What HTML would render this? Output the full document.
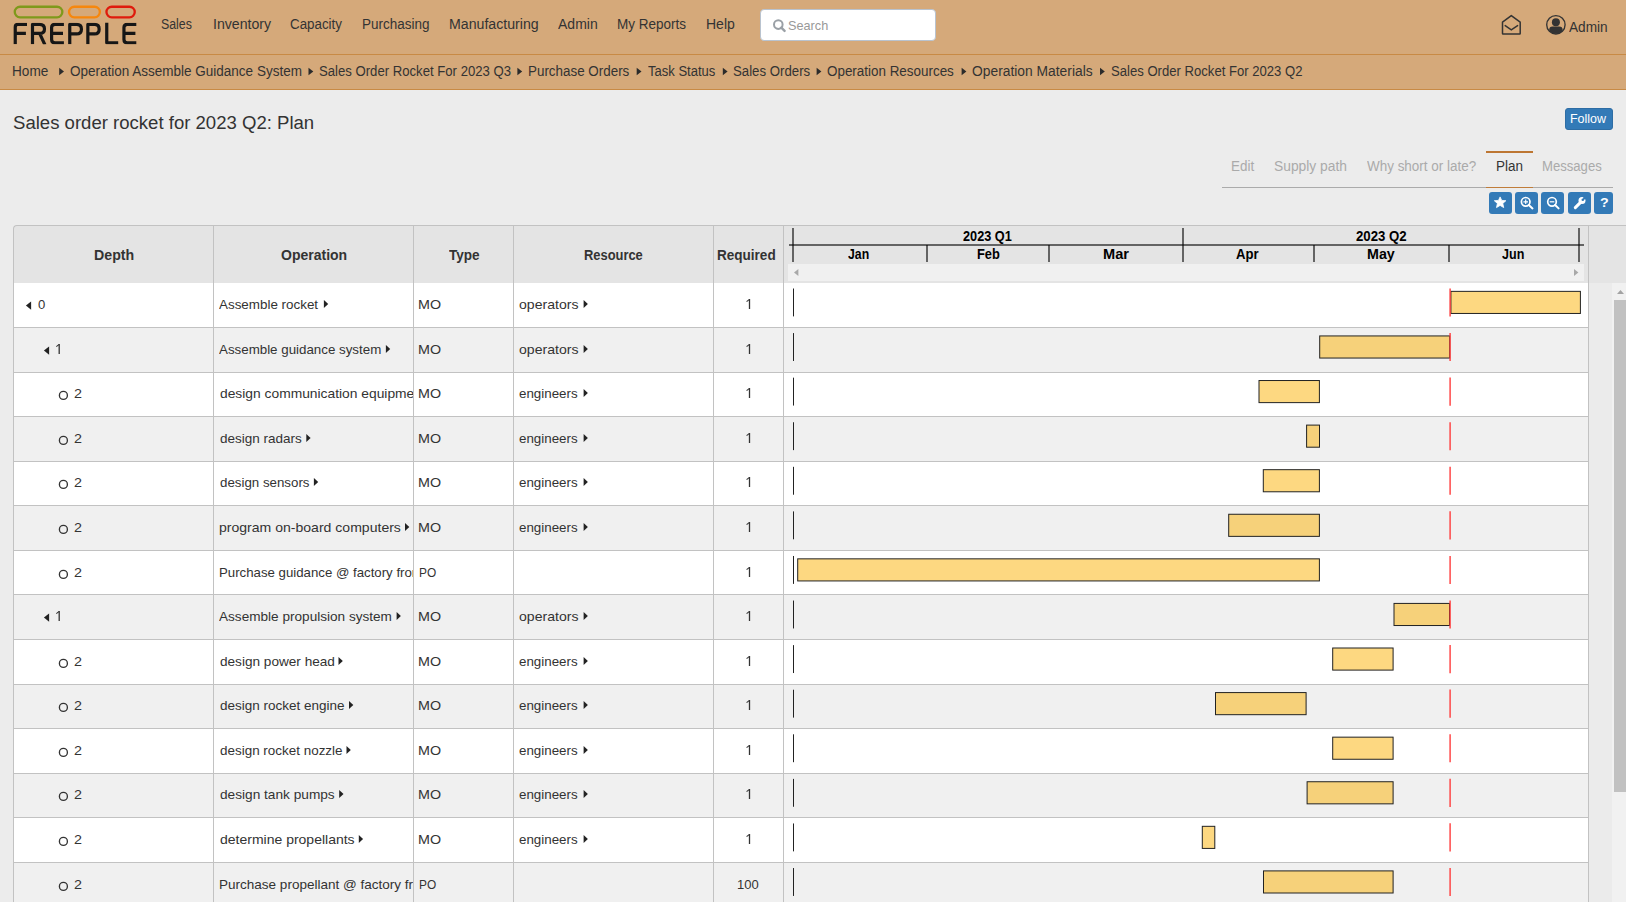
<!DOCTYPE html><html><head><meta charset="utf-8"><title>frePPLe</title><style>
html,body{margin:0;padding:0;}
body{width:1626px;height:902px;overflow:hidden;position:relative;background:#ececec;font-family:"Liberation Sans", sans-serif;}
.t{position:absolute;white-space:nowrap;transform-origin:left center;}
.r{position:absolute;box-sizing:border-box;}
svg{position:absolute;overflow:visible;}
</style></head><body>
<div class="r" style="left:0px;top:0px;width:1626px;height:54px;background:#d5a97a;"></div>
<div class="r" style="left:0px;top:54px;width:1626px;height:1px;background:#c88a45;"></div>
<div class="r" style="left:0px;top:55px;width:1626px;height:34px;background:#d5a97a;"></div>
<div class="r" style="left:0px;top:89px;width:1626px;height:1px;background:#c88a45;"></div>
<svg style="left:0;top:0" width="150" height="50" viewBox="0 0 150 50">
<rect x="14.75" y="6.75" width="47.6" height="10.6" rx="5.3" fill="none" stroke="#7f991b" stroke-width="2.3"/>
<rect x="69.05" y="6.75" width="30.8" height="10.6" rx="5.3" fill="none" stroke="#f6870d" stroke-width="2.3"/>
<rect x="106.45" y="6.75" width="28.3" height="10.6" rx="5.3" fill="none" stroke="#df1b0c" stroke-width="2.3"/>
<defs><clipPath id="lg"><rect x="0" y="22.7" width="150" height="21.6"/></clipPath></defs><g fill="none" stroke="#161616" stroke-width="3.2" stroke-linejoin="round" clip-path="url(#lg)">
<path d="M15.25 44.3V27Q15.25 24.4 18 24.4H27M15.25 33.4H25.9"/>
<path d="M32.5 44.3V24.4H39.5Q44.5 24.4 44.5 28.9Q44.5 33.4 39.5 33.4H32.5M39.6 33.4L45 45"/>
<path d="M63.9 24.4H55Q51.6 24.4 51.6 27.5V39.5Q51.6 42.85 55 42.85H63.9M51.6 33.4H63"/>
<path d="M69.75 44.3V24.4H76.5Q81.45 24.4 81.45 29.15Q81.45 33.9 76.5 33.9H69.75"/>
<path d="M87.85 44.3V24.4H94.5Q99.15 24.4 99.15 29.15Q99.15 33.9 94.5 33.9H87.85"/>
<path d="M106.75 22V42.85H118.2"/>
<path d="M136.3 24.4H127.4Q123.95 24.4 123.95 27.5V39.5Q123.95 42.85 127.4 42.85H136.3M123.95 33.4H135.4"/>
</g></svg>
<span id="t1" class="t" style="left:161.36px;top:17.15px;font-size:14px;line-height:14px;color:#333;transform:scaleX(0.8827);">Sales</span>
<span id="t2" class="t" style="left:213.0px;top:17.15px;font-size:14px;line-height:14px;color:#333;transform:scaleX(1.0090);">Inventory</span>
<span id="t3" class="t" style="left:290.01px;top:17.15px;font-size:14px;line-height:14px;color:#333;transform:scaleX(0.9540);">Capacity</span>
<span id="t4" class="t" style="left:361.64px;top:17.15px;font-size:14px;line-height:14px;color:#333;transform:scaleX(0.9640);">Purchasing</span>
<span id="t5" class="t" style="left:448.99px;top:17.15px;font-size:14px;line-height:14px;color:#333;transform:scaleX(1.0115);">Manufacturing</span>
<span id="t6" class="t" style="left:558.19px;top:17.15px;font-size:14px;line-height:14px;color:#333;transform:scaleX(1.0003);">Admin</span>
<span id="t7" class="t" style="left:617.06px;top:17.15px;font-size:14px;line-height:14px;color:#333;transform:scaleX(0.9644);">My Reports</span>
<span id="t8" class="t" style="left:705.99px;top:17.15px;font-size:14px;line-height:14px;color:#333;transform:scaleX(1.0008);">Help</span>
<div class="r" style="left:760px;top:9px;width:176px;height:32px;background:#fff;border:1px solid #b9c3cf;border-radius:4px;"></div>
<span id="t9" class="t" style="left:788.21px;top:19.00px;font-size:13px;line-height:13px;color:#999;transform:scaleX(0.9756);">Search</span>
<span id="t10" class="t" style="left:1569.22px;top:20.15px;font-size:14px;line-height:14px;color:#333;transform:scaleX(0.9744);">Admin</span>
<span id="t11" class="t" style="left:12.43px;top:64.15px;font-size:14px;line-height:14px;color:#333;transform:scaleX(0.9726);">Home</span>
<span id="t12" class="t" style="left:69.83px;top:64.15px;font-size:14px;line-height:14px;color:#333;transform:scaleX(0.9644);">Operation Assemble Guidance System</span>
<span id="t13" class="t" style="left:318.87px;top:64.15px;font-size:14px;line-height:14px;color:#333;transform:scaleX(0.9384);">Sales Order Rocket For 2023 Q3</span>
<span id="t14" class="t" style="left:528.25px;top:64.15px;font-size:14px;line-height:14px;color:#333;transform:scaleX(0.9572);">Purchase Orders</span>
<span id="t15" class="t" style="left:648.0px;top:64.15px;font-size:14px;line-height:14px;color:#333;transform:scaleX(0.9308);">Task Status</span>
<span id="t16" class="t" style="left:733.05px;top:64.15px;font-size:14px;line-height:14px;color:#333;transform:scaleX(0.9446);">Sales Orders</span>
<span id="t17" class="t" style="left:827.02px;top:64.15px;font-size:14px;line-height:14px;color:#333;transform:scaleX(0.9585);">Operation Resources</span>
<span id="t18" class="t" style="left:972.2px;top:64.15px;font-size:14px;line-height:14px;color:#333;transform:scaleX(0.9876);">Operation Materials</span>
<span id="t19" class="t" style="left:1111.25px;top:64.15px;font-size:14px;line-height:14px;color:#333;transform:scaleX(0.9359);">Sales Order Rocket For 2023 Q2</span>
<span id="t20" class="t" style="left:12.78px;top:113.76px;font-size:18px;line-height:18px;color:#333;transform:scaleX(1.0309);">Sales order rocket for 2023 Q2: Plan</span>
<div class="r" style="left:1565px;top:108px;width:48px;height:22px;background:#337ab7;border:1px solid #2e6da4;border-radius:3px;"></div>
<span id="t21" class="t" style="left:1570.06px;top:112.30px;font-size:13px;line-height:13px;color:#fff;transform:scaleX(0.9591);">Follow</span>
<span id="t22" class="t" style="left:1231.25px;top:159.45px;font-size:14px;line-height:14px;color:#aaa;transform:scaleX(0.9590);">Edit</span>
<span id="t23" class="t" style="left:1274.21px;top:159.45px;font-size:14px;line-height:14px;color:#aaa;transform:scaleX(0.9865);">Supply path</span>
<span id="t24" class="t" style="left:1366.6px;top:159.45px;font-size:14px;line-height:14px;color:#aaa;transform:scaleX(0.9605);">Why short or late?</span>
<span id="t25" class="t" style="left:1495.86px;top:159.45px;font-size:14px;line-height:14px;color:#333;transform:scaleX(0.9625);">Plan</span>
<span id="t26" class="t" style="left:1542.25px;top:159.45px;font-size:14px;line-height:14px;color:#aaa;transform:scaleX(0.9366);">Messages</span>
<div class="r" style="left:1222px;top:187px;width:391px;height:1px;background:#ababab;"></div>
<div class="r" style="left:1486px;top:151px;width:47px;height:2px;background:#bd7632;"></div>
<div class="r" style="left:1486px;top:187px;width:47px;height:1px;background:#c07d3a;"></div>
<div class="r" style="left:1489px;top:192px;width:23px;height:22px;background:#337ab7;border-radius:3px;"></div>
<div class="r" style="left:1515px;top:192px;width:23px;height:22px;background:#337ab7;border-radius:3px;"></div>
<div class="r" style="left:1541px;top:192px;width:23px;height:22px;background:#337ab7;border-radius:3px;"></div>
<div class="r" style="left:1568px;top:192px;width:23px;height:22px;background:#337ab7;border-radius:3px;"></div>
<div class="r" style="left:1594px;top:192px;width:19px;height:22px;background:#337ab7;border-radius:3px;"></div>
<span id="t27" class="t" style="left:1600.01px;top:196.30px;font-size:13px;line-height:13px;color:#fff;font-weight:bold;transform:scaleX(1.0958);">?</span>
<div class="r" style="left:13px;top:225px;width:1623px;height:58px;background:#e4e4e4;border-top:1px solid #c2c2c2;border-left:1px solid #c2c2c2;border-top-left-radius:4px;"></div>
<div class="r" style="left:13px;top:283px;width:1575px;height:44px;background:#fff;"></div>
<div class="r" style="left:13px;top:327px;width:1575px;height:1px;background:#c2c2c2;"></div>
<div class="r" style="left:13px;top:328px;width:1575px;height:44px;background:#f0f0f0;"></div>
<div class="r" style="left:13px;top:372px;width:1575px;height:1px;background:#c2c2c2;"></div>
<div class="r" style="left:13px;top:373px;width:1575px;height:43px;background:#fff;"></div>
<div class="r" style="left:13px;top:416px;width:1575px;height:1px;background:#c2c2c2;"></div>
<div class="r" style="left:13px;top:417px;width:1575px;height:44px;background:#f0f0f0;"></div>
<div class="r" style="left:13px;top:461px;width:1575px;height:1px;background:#c2c2c2;"></div>
<div class="r" style="left:13px;top:462px;width:1575px;height:43px;background:#fff;"></div>
<div class="r" style="left:13px;top:505px;width:1575px;height:1px;background:#c2c2c2;"></div>
<div class="r" style="left:13px;top:506px;width:1575px;height:44px;background:#f0f0f0;"></div>
<div class="r" style="left:13px;top:550px;width:1575px;height:1px;background:#c2c2c2;"></div>
<div class="r" style="left:13px;top:551px;width:1575px;height:43px;background:#fff;"></div>
<div class="r" style="left:13px;top:594px;width:1575px;height:1px;background:#c2c2c2;"></div>
<div class="r" style="left:13px;top:595px;width:1575px;height:44px;background:#f0f0f0;"></div>
<div class="r" style="left:13px;top:639px;width:1575px;height:1px;background:#c2c2c2;"></div>
<div class="r" style="left:13px;top:640px;width:1575px;height:44px;background:#fff;"></div>
<div class="r" style="left:13px;top:684px;width:1575px;height:1px;background:#c2c2c2;"></div>
<div class="r" style="left:13px;top:685px;width:1575px;height:43px;background:#f0f0f0;"></div>
<div class="r" style="left:13px;top:728px;width:1575px;height:1px;background:#c2c2c2;"></div>
<div class="r" style="left:13px;top:729px;width:1575px;height:44px;background:#fff;"></div>
<div class="r" style="left:13px;top:773px;width:1575px;height:1px;background:#c2c2c2;"></div>
<div class="r" style="left:13px;top:774px;width:1575px;height:43px;background:#f0f0f0;"></div>
<div class="r" style="left:13px;top:817px;width:1575px;height:1px;background:#c2c2c2;"></div>
<div class="r" style="left:13px;top:818px;width:1575px;height:44px;background:#fff;"></div>
<div class="r" style="left:13px;top:862px;width:1575px;height:1px;background:#c2c2c2;"></div>
<div class="r" style="left:13px;top:863px;width:1575px;height:43px;background:#f0f0f0;"></div>
<div class="r" style="left:13px;top:906px;width:1575px;height:1px;background:#c2c2c2;"></div>
<div class="r" style="left:13px;top:283px;width:1px;height:619px;background:#c2c2c2;"></div>
<div class="r" style="left:213px;top:226px;width:1px;height:677px;background:#c2c2c2;"></div>
<div class="r" style="left:413px;top:226px;width:1px;height:677px;background:#c2c2c2;"></div>
<div class="r" style="left:513px;top:226px;width:1px;height:677px;background:#c2c2c2;"></div>
<div class="r" style="left:713px;top:226px;width:1px;height:677px;background:#c2c2c2;"></div>
<div class="r" style="left:783px;top:226px;width:1px;height:677px;background:#c2c2c2;"></div>
<div class="r" style="left:1588px;top:226px;width:1px;height:677px;background:#c2c2c2;"></div>
<div class="r" style="left:1589px;top:283px;width:37px;height:619px;background:#ebebeb;"></div>
<div class="r" style="left:1612px;top:283px;width:14px;height:619px;background:#f1f1f1;"></div>
<div class="r" style="left:1614px;top:300px;width:12px;height:492px;background:#c1c1c1;"></div>
<span id="t28" class="t" style="left:93.78px;top:248.05px;font-size:14px;line-height:14px;color:#333;font-weight:bold;transform:scaleX(1.0134);">Depth</span>
<span id="t29" class="t" style="left:280.8px;top:248.05px;font-size:14px;line-height:14px;color:#333;font-weight:bold;transform:scaleX(1.0002);">Operation</span>
<span id="t30" class="t" style="left:448.57px;top:248.05px;font-size:14px;line-height:14px;color:#333;font-weight:bold;transform:scaleX(0.9691);">Type</span>
<span id="t31" class="t" style="left:584.26px;top:248.05px;font-size:14px;line-height:14px;color:#333;font-weight:bold;transform:scaleX(0.9208);">Resource</span>
<span id="t32" class="t" style="left:717.21px;top:248.05px;font-size:14px;line-height:14px;color:#333;font-weight:bold;transform:scaleX(0.9668);">Required</span>
<div class="r" style="left:788px;top:264px;width:796px;height:17px;background:#f0f0f0;"></div>
<span id="t33" class="t" style="left:963.0px;top:229.05px;font-size:14px;line-height:14px;color:#000;font-weight:bold;transform:scaleX(0.9076);">2023 Q1</span>
<span id="t34" class="t" style="left:1356.02px;top:229.05px;font-size:14px;line-height:14px;color:#000;font-weight:bold;transform:scaleX(0.9436);">2023 Q2</span>
<span id="t35" class="t" style="left:848.0px;top:246.95px;font-size:14px;line-height:14px;color:#000;font-weight:bold;transform:scaleX(0.8758);">Jan</span>
<span id="t36" class="t" style="left:977.24px;top:246.95px;font-size:14px;line-height:14px;color:#000;font-weight:bold;transform:scaleX(0.9174);">Feb</span>
<span id="t37" class="t" style="left:1102.98px;top:246.95px;font-size:14px;line-height:14px;color:#000;font-weight:bold;transform:scaleX(1.0424);">Mar</span>
<span id="t38" class="t" style="left:1236.21px;top:246.95px;font-size:14px;line-height:14px;color:#000;font-weight:bold;transform:scaleX(0.9382);">Apr</span>
<span id="t39" class="t" style="left:1366.76px;top:246.95px;font-size:14px;line-height:14px;color:#000;font-weight:bold;transform:scaleX(1.0199);">May</span>
<span id="t40" class="t" style="left:1502.21px;top:246.95px;font-size:14px;line-height:14px;color:#000;font-weight:bold;transform:scaleX(0.8967);">Jun</span>
<span id="t41" class="t" style="left:37.6px;top:298.00px;font-size:13px;line-height:13px;color:#333;transform:scaleX(1.0091);">0</span>
<div class="r" style="left:214px;top:283px;width:199px;height:44px;overflow:hidden;">
<span id="t42" class="t" style="left:5.01px;top:15.00px;font-size:13px;line-height:13px;color:#333;transform:scaleX(1.0310);">Assemble rocket</span>
</div>
<span id="t43" class="t" style="left:418.32px;top:298.00px;font-size:13px;line-height:13px;color:#333;transform:scaleX(1.1010);">MO</span>
<span id="t44" class="t" style="left:518.81px;top:298.00px;font-size:13px;line-height:13px;color:#333;transform:scaleX(1.0820);">operators</span>
<div class="r" style="left:214px;top:328px;width:199px;height:44px;overflow:hidden;">
<span id="t45" class="t" style="left:5.01px;top:15.00px;font-size:13px;line-height:13px;color:#333;transform:scaleX(1.0252);">Assemble guidance system</span>
</div>
<span id="t46" class="t" style="left:418.32px;top:343.00px;font-size:13px;line-height:13px;color:#333;transform:scaleX(1.1010);">MO</span>
<span id="t47" class="t" style="left:518.81px;top:343.00px;font-size:13px;line-height:13px;color:#333;transform:scaleX(1.0820);">operators</span>
<span id="t48" class="t" style="left:73.65px;top:387.00px;font-size:13px;line-height:13px;color:#333;transform:scaleX(1.1018);">2</span>
<div class="r" style="left:214px;top:372px;width:199px;height:44px;overflow:hidden;">
<span id="t49" class="t" style="left:5.97px;top:15.00px;font-size:13px;line-height:13px;color:#333;transform:scaleX(1.0626);">design communication equipment</span>
</div>
<span id="t50" class="t" style="left:418.32px;top:387.00px;font-size:13px;line-height:13px;color:#333;transform:scaleX(1.1010);">MO</span>
<span id="t51" class="t" style="left:518.81px;top:387.00px;font-size:13px;line-height:13px;color:#333;transform:scaleX(1.0264);">engineers</span>
<span id="t52" class="t" style="left:73.65px;top:432.00px;font-size:13px;line-height:13px;color:#333;transform:scaleX(1.1018);">2</span>
<div class="r" style="left:214px;top:417px;width:199px;height:44px;overflow:hidden;">
<span id="t53" class="t" style="left:5.98px;top:15.00px;font-size:13px;line-height:13px;color:#333;transform:scaleX(1.0385);">design radars</span>
</div>
<span id="t54" class="t" style="left:418.32px;top:432.00px;font-size:13px;line-height:13px;color:#333;transform:scaleX(1.1010);">MO</span>
<span id="t55" class="t" style="left:518.81px;top:432.00px;font-size:13px;line-height:13px;color:#333;transform:scaleX(1.0264);">engineers</span>
<span id="t56" class="t" style="left:73.65px;top:476.00px;font-size:13px;line-height:13px;color:#333;transform:scaleX(1.1018);">2</span>
<div class="r" style="left:214px;top:461px;width:199px;height:44px;overflow:hidden;">
<span id="t57" class="t" style="left:5.99px;top:15.00px;font-size:13px;line-height:13px;color:#333;transform:scaleX(1.0231);">design sensors</span>
</div>
<span id="t58" class="t" style="left:418.32px;top:476.00px;font-size:13px;line-height:13px;color:#333;transform:scaleX(1.1010);">MO</span>
<span id="t59" class="t" style="left:518.81px;top:476.00px;font-size:13px;line-height:13px;color:#333;transform:scaleX(1.0264);">engineers</span>
<span id="t60" class="t" style="left:73.65px;top:521.00px;font-size:13px;line-height:13px;color:#333;transform:scaleX(1.1018);">2</span>
<div class="r" style="left:214px;top:506px;width:199px;height:44px;overflow:hidden;">
<span id="t61" class="t" style="left:4.96px;top:15.00px;font-size:13px;line-height:13px;color:#333;transform:scaleX(1.0804);">program on-board computers</span>
</div>
<span id="t62" class="t" style="left:418.32px;top:521.00px;font-size:13px;line-height:13px;color:#333;transform:scaleX(1.1010);">MO</span>
<span id="t63" class="t" style="left:518.81px;top:521.00px;font-size:13px;line-height:13px;color:#333;transform:scaleX(1.0264);">engineers</span>
<span id="t64" class="t" style="left:73.65px;top:566.00px;font-size:13px;line-height:13px;color:#333;transform:scaleX(1.1018);">2</span>
<div class="r" style="left:214px;top:551px;width:199px;height:44px;overflow:hidden;">
<span id="t65" class="t" style="left:4.99px;top:15.00px;font-size:13px;line-height:13px;color:#333;transform:scaleX(1.0176);">Purchase guidance @ factory from supplier</span>
</div>
<span id="t66" class="t" style="left:418.5px;top:566.00px;font-size:13px;line-height:13px;color:#333;transform:scaleX(0.9153);">PO</span>
<div class="r" style="left:214px;top:595px;width:199px;height:44px;overflow:hidden;">
<span id="t67" class="t" style="left:5.02px;top:15.00px;font-size:13px;line-height:13px;color:#333;transform:scaleX(1.0452);">Assemble propulsion system</span>
</div>
<span id="t68" class="t" style="left:418.32px;top:610.00px;font-size:13px;line-height:13px;color:#333;transform:scaleX(1.1010);">MO</span>
<span id="t69" class="t" style="left:518.81px;top:610.00px;font-size:13px;line-height:13px;color:#333;transform:scaleX(1.0820);">operators</span>
<span id="t70" class="t" style="left:73.65px;top:655.00px;font-size:13px;line-height:13px;color:#333;transform:scaleX(1.1018);">2</span>
<div class="r" style="left:214px;top:640px;width:199px;height:44px;overflow:hidden;">
<span id="t71" class="t" style="left:5.98px;top:15.00px;font-size:13px;line-height:13px;color:#333;transform:scaleX(1.0459);">design power head</span>
</div>
<span id="t72" class="t" style="left:418.32px;top:655.00px;font-size:13px;line-height:13px;color:#333;transform:scaleX(1.1010);">MO</span>
<span id="t73" class="t" style="left:518.81px;top:655.00px;font-size:13px;line-height:13px;color:#333;transform:scaleX(1.0264);">engineers</span>
<span id="t74" class="t" style="left:73.65px;top:699.00px;font-size:13px;line-height:13px;color:#333;transform:scaleX(1.1018);">2</span>
<div class="r" style="left:214px;top:684px;width:199px;height:44px;overflow:hidden;">
<span id="t75" class="t" style="left:5.98px;top:15.00px;font-size:13px;line-height:13px;color:#333;transform:scaleX(1.0378);">design rocket engine</span>
</div>
<span id="t76" class="t" style="left:418.32px;top:699.00px;font-size:13px;line-height:13px;color:#333;transform:scaleX(1.1010);">MO</span>
<span id="t77" class="t" style="left:518.81px;top:699.00px;font-size:13px;line-height:13px;color:#333;transform:scaleX(1.0264);">engineers</span>
<span id="t78" class="t" style="left:73.65px;top:744.00px;font-size:13px;line-height:13px;color:#333;transform:scaleX(1.1018);">2</span>
<div class="r" style="left:214px;top:729px;width:199px;height:44px;overflow:hidden;">
<span id="t79" class="t" style="left:5.98px;top:15.00px;font-size:13px;line-height:13px;color:#333;transform:scaleX(1.0339);">design rocket nozzle</span>
</div>
<span id="t80" class="t" style="left:418.32px;top:744.00px;font-size:13px;line-height:13px;color:#333;transform:scaleX(1.1010);">MO</span>
<span id="t81" class="t" style="left:518.81px;top:744.00px;font-size:13px;line-height:13px;color:#333;transform:scaleX(1.0264);">engineers</span>
<span id="t82" class="t" style="left:73.65px;top:788.00px;font-size:13px;line-height:13px;color:#333;transform:scaleX(1.1018);">2</span>
<div class="r" style="left:214px;top:773px;width:199px;height:44px;overflow:hidden;">
<span id="t83" class="t" style="left:5.97px;top:15.00px;font-size:13px;line-height:13px;color:#333;transform:scaleX(1.0510);">design tank pumps</span>
</div>
<span id="t84" class="t" style="left:418.32px;top:788.00px;font-size:13px;line-height:13px;color:#333;transform:scaleX(1.1010);">MO</span>
<span id="t85" class="t" style="left:518.81px;top:788.00px;font-size:13px;line-height:13px;color:#333;transform:scaleX(1.0264);">engineers</span>
<span id="t86" class="t" style="left:73.65px;top:833.00px;font-size:13px;line-height:13px;color:#333;transform:scaleX(1.1018);">2</span>
<div class="r" style="left:214px;top:818px;width:199px;height:44px;overflow:hidden;">
<span id="t87" class="t" style="left:5.96px;top:15.00px;font-size:13px;line-height:13px;color:#333;transform:scaleX(1.0767);">determine propellants</span>
</div>
<span id="t88" class="t" style="left:418.32px;top:833.00px;font-size:13px;line-height:13px;color:#333;transform:scaleX(1.1010);">MO</span>
<span id="t89" class="t" style="left:518.81px;top:833.00px;font-size:13px;line-height:13px;color:#333;transform:scaleX(1.0264);">engineers</span>
<span id="t90" class="t" style="left:73.65px;top:878.00px;font-size:13px;line-height:13px;color:#333;transform:scaleX(1.1018);">2</span>
<div class="r" style="left:214px;top:863px;width:199px;height:44px;overflow:hidden;">
<span id="t91" class="t" style="left:4.98px;top:15.00px;font-size:13px;line-height:13px;color:#333;transform:scaleX(1.0400);">Purchase propellant @ factory from supplier</span>
</div>
<span id="t92" class="t" style="left:418.5px;top:878.00px;font-size:13px;line-height:13px;color:#333;transform:scaleX(0.9153);">PO</span>
<span id="t93" class="t" style="left:737.0px;top:878.00px;font-size:13px;line-height:13px;color:#333;">100</span>
<svg style="left:0;top:0" width="1626" height="902" viewBox="0 0 1626 902"><circle cx="778.3" cy="24.6" r="4.3" fill="none" stroke="#9aa0a6" stroke-width="2"/>
<path d="M781.3 27.6L784.6 30.9" stroke="#9aa0a6" stroke-width="2.4" stroke-linecap="round"/>
<path d="M1502.5 33.5V22.2L1511.3 15.6L1520.2 22.2V33.5Q1520.2 34 1519.7 34H1503Q1502.5 34 1502.5 33.5Z" fill="none" stroke="#333" stroke-width="1.5" stroke-linejoin="round"/>
<path d="M1505.2 25.6L1511.3 29.8L1517.6 25.6" fill="none" stroke="#333" stroke-width="1.5" stroke-linecap="round"/>
<defs><clipPath id="uc"><circle cx="1555.9" cy="24.8" r="9"/></clipPath></defs>
<circle cx="1555.9" cy="24.8" r="9.2" fill="none" stroke="#333" stroke-width="1.35"/>
<circle cx="1555.9" cy="22.2" r="4" fill="#333"/>
<g clip-path="url(#uc)"><path d="M1549.2 36V29.8Q1549.2 26.5 1552.6 26.5H1559.2Q1562.6 26.5 1562.6 29.8V36Z" fill="#333"/></g>
<path d="M59.199999999999996 67.8L63.99999999999999 71.5L59.199999999999996 75.2Z" fill="#2b2b2b"/>
<path d="M308.5 67.8L313.3 71.5L308.5 75.2Z" fill="#2b2b2b"/>
<path d="M517.4 67.8L522.1999999999999 71.5L517.4 75.2Z" fill="#2b2b2b"/>
<path d="M636.6999999999999 67.8L641.4999999999999 71.5L636.6999999999999 75.2Z" fill="#2b2b2b"/>
<path d="M722.8 67.8L727.5999999999999 71.5L722.8 75.2Z" fill="#2b2b2b"/>
<path d="M816.5999999999999 67.8L821.3999999999999 71.5L816.5999999999999 75.2Z" fill="#2b2b2b"/>
<path d="M961.5999999999999 67.8L966.3999999999999 71.5L961.5999999999999 75.2Z" fill="#2b2b2b"/>
<path d="M1100.0 67.8L1104.8 71.5L1100.0 75.2Z" fill="#2b2b2b"/>
<path d="M1500.1 196.9L1501.7 200.4L1505.9 200.7L1502.8 203.4L1503.7 207.6L1500.1 205.4L1496.5 207.6L1497.4 203.4L1494.3 200.7L1498.5 200.4Z" fill="#fff" stroke="#fff" stroke-width="0.8" stroke-linejoin="round"/>
<circle cx="1525.7" cy="201.8" r="4.3" fill="none" stroke="#fff" stroke-width="1.7"/>
<path d="M1528.8 205L1532.5 208.4" stroke="#fff" stroke-width="2" stroke-linecap="round"/>
<path d="M1523.4 201.8H1528M1525.7 199.5V204.1" stroke="#fff" stroke-width="1.2"/>
<circle cx="1552" cy="201.8" r="4.3" fill="none" stroke="#fff" stroke-width="1.7"/>
<path d="M1555.1 205L1558.6 208.4" stroke="#fff" stroke-width="2" stroke-linecap="round"/>
<path d="M1549.7 201.8H1554.3" stroke="#fff" stroke-width="1.2"/>
<path d="M1575.3 207.6L1580.3 202.6" stroke="#fff" stroke-width="3" stroke-linecap="round"/>
<circle cx="1582" cy="200.4" r="3.5" fill="#fff"/>
<circle cx="1582.8" cy="199.8" r="1.3" fill="#337ab7"/>
<path d="M1582.8 199.8L1583.8 195.2L1587.6 199.1Z" fill="#337ab7"/>
<path d="M1617 294L1620.5 290L1624 294Z" fill="#a3a3a3"/>
<g fill="none" stroke="rgba(0,0,0,0.56)" stroke-width="2">
<path d="M789 245H1584"/>
<path d="M793 228V262M1183 228V262M1579 228V262"/>
<path d="M927 245V262M1049 245V262M1314 245V262M1449 245V262"/>
</g>
<path d="M798.4 269L794 272.5L798.4 276Z" fill="#a8a8a8"/>
<path d="M1574 269L1578.4 272.5L1574 276Z" fill="#a8a8a8"/>
<path d="M31.099999999999998 301.4L25.9 305.59999999999997L31.099999999999998 309.79999999999995Z" fill="#222"/>
<path d="M323.9 300L328.2 304.0L323.9 308Z" fill="#222"/>
<path d="M583.6 300L587.9 304.0L583.6 308Z" fill="#222"/>
<path d="M749.50 309.00V299.00" stroke="#333" stroke-width="1.3"/>
<path d="M746.60 301.60L749.50 299.40" stroke="#333" stroke-width="1.1"/>
<path d="M49.1 346.4L43.9 350.59999999999997L49.1 354.79999999999995Z" fill="#222"/>
<path d="M59.20 354.00V344.00" stroke="#333" stroke-width="1.3"/>
<path d="M56.30 346.60L59.20 344.40" stroke="#333" stroke-width="1.1"/>
<path d="M385.9 345L390.2 349.0L385.9 353Z" fill="#222"/>
<path d="M583.6 345L587.9 349.0L583.6 353Z" fill="#222"/>
<path d="M749.50 354.00V344.00" stroke="#333" stroke-width="1.3"/>
<path d="M746.60 346.60L749.50 344.40" stroke="#333" stroke-width="1.1"/>
<circle cx="63.4" cy="395.4" r="4" fill="none" stroke="#333" stroke-width="1.35"/>
<path d="M583.6 389L587.9 393.0L583.6 397Z" fill="#222"/>
<path d="M749.50 398.00V388.00" stroke="#333" stroke-width="1.3"/>
<path d="M746.60 390.60L749.50 388.40" stroke="#333" stroke-width="1.1"/>
<circle cx="63.4" cy="440.4" r="4" fill="none" stroke="#333" stroke-width="1.35"/>
<path d="M306.3 434L310.6 438.0L306.3 442Z" fill="#222"/>
<path d="M583.6 434L587.9 438.0L583.6 442Z" fill="#222"/>
<path d="M749.50 443.00V433.00" stroke="#333" stroke-width="1.3"/>
<path d="M746.60 435.60L749.50 433.40" stroke="#333" stroke-width="1.1"/>
<circle cx="63.4" cy="484.4" r="4" fill="none" stroke="#333" stroke-width="1.35"/>
<path d="M313.9 478L318.2 482.0L313.9 486Z" fill="#222"/>
<path d="M583.6 478L587.9 482.0L583.6 486Z" fill="#222"/>
<path d="M749.50 487.00V477.00" stroke="#333" stroke-width="1.3"/>
<path d="M746.60 479.60L749.50 477.40" stroke="#333" stroke-width="1.1"/>
<circle cx="63.4" cy="529.4" r="4" fill="none" stroke="#333" stroke-width="1.35"/>
<path d="M405 523L409.3 527.0L405 531Z" fill="#222"/>
<path d="M583.6 523L587.9 527.0L583.6 531Z" fill="#222"/>
<path d="M749.50 532.00V522.00" stroke="#333" stroke-width="1.3"/>
<path d="M746.60 524.60L749.50 522.40" stroke="#333" stroke-width="1.1"/>
<circle cx="63.4" cy="574.4" r="4" fill="none" stroke="#333" stroke-width="1.35"/>
<path d="M749.50 577.00V567.00" stroke="#333" stroke-width="1.3"/>
<path d="M746.60 569.60L749.50 567.40" stroke="#333" stroke-width="1.1"/>
<path d="M49.1 613.4L43.9 617.6L49.1 621.8Z" fill="#222"/>
<path d="M59.20 621.00V611.00" stroke="#333" stroke-width="1.3"/>
<path d="M56.30 613.60L59.20 611.40" stroke="#333" stroke-width="1.1"/>
<path d="M396.6 612L400.90000000000003 616.0L396.6 620Z" fill="#222"/>
<path d="M583.6 612L587.9 616.0L583.6 620Z" fill="#222"/>
<path d="M749.50 621.00V611.00" stroke="#333" stroke-width="1.3"/>
<path d="M746.60 613.60L749.50 611.40" stroke="#333" stroke-width="1.1"/>
<circle cx="63.4" cy="663.4" r="4" fill="none" stroke="#333" stroke-width="1.35"/>
<path d="M338.5 657L342.8 661.0L338.5 665Z" fill="#222"/>
<path d="M583.6 657L587.9 661.0L583.6 665Z" fill="#222"/>
<path d="M749.50 666.00V656.00" stroke="#333" stroke-width="1.3"/>
<path d="M746.60 658.60L749.50 656.40" stroke="#333" stroke-width="1.1"/>
<circle cx="63.4" cy="707.4" r="4" fill="none" stroke="#333" stroke-width="1.35"/>
<path d="M349 701L353.3 705.0L349 709Z" fill="#222"/>
<path d="M583.6 701L587.9 705.0L583.6 709Z" fill="#222"/>
<path d="M749.50 710.00V700.00" stroke="#333" stroke-width="1.3"/>
<path d="M746.60 702.60L749.50 700.40" stroke="#333" stroke-width="1.1"/>
<circle cx="63.4" cy="752.4" r="4" fill="none" stroke="#333" stroke-width="1.35"/>
<path d="M346.5 746L350.8 750.0L346.5 754Z" fill="#222"/>
<path d="M583.6 746L587.9 750.0L583.6 754Z" fill="#222"/>
<path d="M749.50 755.00V745.00" stroke="#333" stroke-width="1.3"/>
<path d="M746.60 747.60L749.50 745.40" stroke="#333" stroke-width="1.1"/>
<circle cx="63.4" cy="796.4" r="4" fill="none" stroke="#333" stroke-width="1.35"/>
<path d="M339.2 790L343.5 794.0L339.2 798Z" fill="#222"/>
<path d="M583.6 790L587.9 794.0L583.6 798Z" fill="#222"/>
<path d="M749.50 799.00V789.00" stroke="#333" stroke-width="1.3"/>
<path d="M746.60 791.60L749.50 789.40" stroke="#333" stroke-width="1.1"/>
<circle cx="63.4" cy="841.4" r="4" fill="none" stroke="#333" stroke-width="1.35"/>
<path d="M358.8 835L363.1 839.0L358.8 843Z" fill="#222"/>
<path d="M583.6 835L587.9 839.0L583.6 843Z" fill="#222"/>
<path d="M749.50 844.00V834.00" stroke="#333" stroke-width="1.3"/>
<path d="M746.60 836.60L749.50 834.40" stroke="#333" stroke-width="1.1"/>
<circle cx="63.4" cy="886.4" r="4" fill="none" stroke="#333" stroke-width="1.35"/>
<rect x="1450.90" y="291.36" width="129.50" height="22.10" fill="rgba(251,183,22,0.54)" stroke="#222" stroke-width="1"/>
<path d="M793.5 288.50V316.40" stroke="#222" stroke-width="1"/>
<path d="M1450.1 288.40V316.50" stroke="#ff3b3b" stroke-width="1.4"/>
<rect x="1319.70" y="335.94" width="130.00" height="22.10" fill="rgba(251,183,22,0.54)" stroke="#222" stroke-width="1"/>
<path d="M793.5 333.08V360.98" stroke="#222" stroke-width="1"/>
<path d="M1450.1 332.98V361.08" stroke="#ff3b3b" stroke-width="1.4"/>
<rect x="1259.00" y="380.52" width="60.40" height="22.10" fill="rgba(251,183,22,0.54)" stroke="#222" stroke-width="1"/>
<path d="M793.5 377.66V405.56" stroke="#222" stroke-width="1"/>
<path d="M1450.1 377.56V405.66" stroke="#ff3b3b" stroke-width="1.4"/>
<rect x="1306.60" y="425.10" width="12.90" height="22.10" fill="rgba(251,183,22,0.54)" stroke="#222" stroke-width="1"/>
<path d="M793.5 422.24V450.14" stroke="#222" stroke-width="1"/>
<path d="M1450.1 422.14V450.24" stroke="#ff3b3b" stroke-width="1.4"/>
<rect x="1263.30" y="469.68" width="56.10" height="22.10" fill="rgba(251,183,22,0.54)" stroke="#222" stroke-width="1"/>
<path d="M793.5 466.82V494.72" stroke="#222" stroke-width="1"/>
<path d="M1450.1 466.72V494.82" stroke="#ff3b3b" stroke-width="1.4"/>
<rect x="1228.70" y="514.26" width="90.70" height="22.10" fill="rgba(251,183,22,0.54)" stroke="#222" stroke-width="1"/>
<path d="M793.5 511.40V539.30" stroke="#222" stroke-width="1"/>
<path d="M1450.1 511.30V539.40" stroke="#ff3b3b" stroke-width="1.4"/>
<rect x="797.70" y="558.84" width="521.70" height="22.10" fill="rgba(251,183,22,0.54)" stroke="#222" stroke-width="1"/>
<path d="M793.5 555.98V583.88" stroke="#222" stroke-width="1"/>
<path d="M1450.1 555.88V583.98" stroke="#ff3b3b" stroke-width="1.4"/>
<rect x="1394.00" y="603.42" width="55.50" height="22.10" fill="rgba(251,183,22,0.54)" stroke="#222" stroke-width="1"/>
<path d="M793.5 600.56V628.46" stroke="#222" stroke-width="1"/>
<path d="M1450.1 600.46V628.56" stroke="#ff3b3b" stroke-width="1.4"/>
<rect x="1332.70" y="648.00" width="60.40" height="22.10" fill="rgba(251,183,22,0.54)" stroke="#222" stroke-width="1"/>
<path d="M793.5 645.14V673.04" stroke="#222" stroke-width="1"/>
<path d="M1450.1 645.04V673.14" stroke="#ff3b3b" stroke-width="1.4"/>
<rect x="1215.50" y="692.58" width="90.60" height="22.10" fill="rgba(251,183,22,0.54)" stroke="#222" stroke-width="1"/>
<path d="M793.5 689.72V717.62" stroke="#222" stroke-width="1"/>
<path d="M1450.1 689.62V717.72" stroke="#ff3b3b" stroke-width="1.4"/>
<rect x="1332.70" y="737.16" width="60.40" height="22.10" fill="rgba(251,183,22,0.54)" stroke="#222" stroke-width="1"/>
<path d="M793.5 734.30V762.20" stroke="#222" stroke-width="1"/>
<path d="M1450.1 734.20V762.30" stroke="#ff3b3b" stroke-width="1.4"/>
<rect x="1307.10" y="781.74" width="86.00" height="22.10" fill="rgba(251,183,22,0.54)" stroke="#222" stroke-width="1"/>
<path d="M793.5 778.88V806.78" stroke="#222" stroke-width="1"/>
<path d="M1450.1 778.78V806.88" stroke="#ff3b3b" stroke-width="1.4"/>
<rect x="1202.30" y="826.32" width="12.50" height="22.10" fill="rgba(251,183,22,0.54)" stroke="#222" stroke-width="1"/>
<path d="M793.5 823.46V851.36" stroke="#222" stroke-width="1"/>
<path d="M1450.1 823.36V851.46" stroke="#ff3b3b" stroke-width="1.4"/>
<rect x="1263.50" y="870.90" width="129.60" height="22.10" fill="rgba(251,183,22,0.54)" stroke="#222" stroke-width="1"/>
<path d="M793.5 868.04V895.94" stroke="#222" stroke-width="1"/>
<path d="M1450.1 867.94V896.04" stroke="#ff3b3b" stroke-width="1.4"/></svg>
</body></html>
